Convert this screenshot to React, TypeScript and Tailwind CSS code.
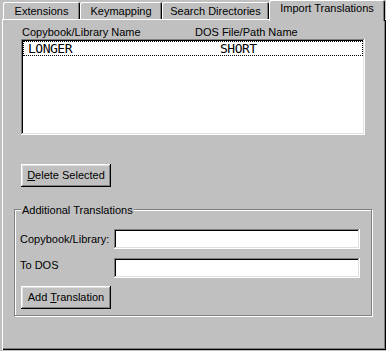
import React from "react";

const btn =
  "flex items-center justify-center w-[90px] h-[23px] bg-[#c0c0c0] shadow-[inset_-1px_-1px_#000,inset_1px_1px_#fff,inset_-2px_-2px_#808080,inset_2px_2px_#dfdfdf]";
const field =
  "w-[246px] h-[20px] bg-white shadow-[inset_-1px_-1px_#fff,inset_1px_1px_#808080,inset_-2px_-2px_#dfdfdf,inset_2px_2px_#000]";

function Tab({ label, w }: { label: string; w: string }) {
  return (
    <div
      className={`${w} h-[17px] mt-[2px] flex justify-center pt-[3px] bg-[#c0c0c0] rounded-t-[2px] shadow-[inset_1px_1px_#fff,inset_-1px_0_#000,inset_-2px_0_#808080]`}
    >
      {label}
    </div>
  );
}

export default function App() {
  return (
    <div
      className="w-[386px] h-[351px] bg-[#c0c0c0] text-black text-[11px] leading-[13px] overflow-hidden"
      style={{ fontFamily: '"Liberation Sans", Arial, sans-serif' }}
    >
      {/* tabs */}
      <div className="flex h-[19px] pl-[3px]">
        <Tab label="Extensions" w="w-[77px]" />
        <Tab label="Keymapping" w="w-[82px]" />
        <Tab label="Search Directories" w="w-[107px]" />
        <div className="relative z-10 w-[116px] h-[21px] flex justify-center pt-[2px] bg-[#c0c0c0] rounded-t-[2px] shadow-[inset_1px_1px_#fff,inset_-1px_0_#000,inset_-2px_0_#808080]">
          Import Translations
        </div>
      </div>

      {/* panel */}
      <div className="ml-[2px] w-[384px] h-[331px] shadow-[inset_1px_1px_#fff,inset_-1px_-1px_#000,inset_-2px_-2px_#808080]">
        <div className="flex pt-[7px] h-[20px]">
          <div className="pl-[20px] w-[193px]">Copybook/Library Name</div>
          <div>DOS File/Path Name</div>
        </div>

        <div className="ml-[19px] w-[344px] h-[96px] p-[2px] bg-white shadow-[inset_-1px_-1px_#fff,inset_1px_1px_#808080,inset_-2px_-2px_#dfdfdf,inset_2px_2px_#000]">
          <div
            className="flex h-[15px] border border-dotted border-black items-center text-[13px] leading-[13px] tracking-[-0.5px]"
            style={{ fontFamily: '"DejaVu Sans Mono", "Liberation Mono", monospace' }}
          >
            <span className="pl-[4px] w-[196px]">LONGER</span>
            <span>SHORT</span>
          </div>
        </div>

        <div className="ml-[19px] mt-[29px]">
          <div className={btn}>
            <span>
              <span className="underline">D</span>elete Selected
            </span>
          </div>
        </div>

        {/* group box */}
        <div className="relative ml-[12px] mt-[22px] w-[358px] h-[107px] border border-[#808080] shadow-[inset_1px_1px_#fff,1px_1px_#fff] pt-[19px]">
          <div className="absolute left-[6px] top-[-6px] px-[1px] bg-[#c0c0c0]">
            Additional Translations
          </div>
          <div className="flex pl-[5px]">
            <div className="w-[94px] pt-[4px]">Copybook/Library:</div>
            <div className={field} />
          </div>
          <div className="flex pl-[5px] mt-[9px]">
            <div className="w-[94px] pt-[1px]">To DOS</div>
            <div className={field} />
          </div>
          <div className="ml-[6px] mt-[8px]">
            <div className={btn}>
              <span>
                Add <span className="underline">T</span>ranslation
              </span>
            </div>
          </div>
        </div>
      </div>
    </div>
  );
}
